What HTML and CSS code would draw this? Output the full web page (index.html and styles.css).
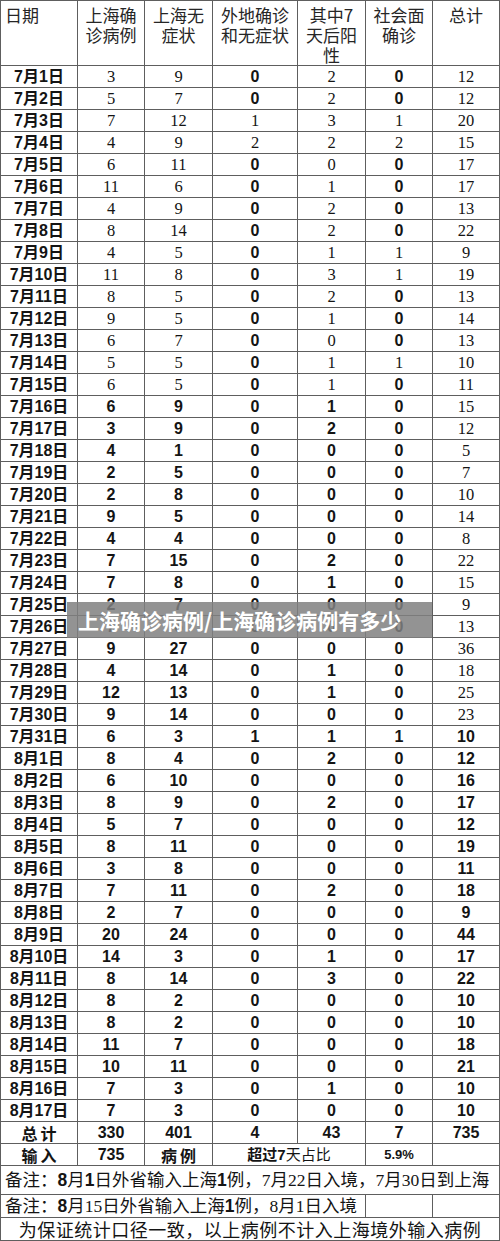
FILE: index.html
```html
<!DOCTYPE html>
<html lang="zh-CN">
<head>
<meta charset="utf-8">
<title>上海确诊病例</title>
<link rel="stylesheet" href="styles.css">
</head>
<body>
<div class="sheet">
  <div class="grid">
    <div class="h first">日期</div>
    <div class="h">上海确<br>诊病例</div>
    <div class="h">上海无<br>症状</div>
    <div class="h">外地确诊<br>和无症状</div>
    <div class="h">其中7<br>天后阳<br>性</div>
    <div class="h">社会面<br>确诊</div>
    <div class="h">总计</div>

    <div class="d">7月1日</div><div class="r">3</div><div class="r">9</div><div class="n">0</div><div class="r">2</div><div class="n">0</div><div class="r">12</div>
    <div class="d">7月2日</div><div class="r">5</div><div class="r">7</div><div class="n">0</div><div class="r">2</div><div class="n">0</div><div class="r">12</div>
    <div class="d">7月3日</div><div class="r">7</div><div class="r">12</div><div class="r">1</div><div class="r">3</div><div class="r">1</div><div class="r">20</div>
    <div class="d">7月4日</div><div class="r">4</div><div class="r">9</div><div class="r">2</div><div class="r">2</div><div class="r">2</div><div class="r">15</div>
    <div class="d">7月5日</div><div class="r">6</div><div class="r">11</div><div class="n">0</div><div class="r">0</div><div class="n">0</div><div class="r">17</div>
    <div class="d">7月6日</div><div class="r">11</div><div class="r">6</div><div class="n">0</div><div class="r">1</div><div class="n">0</div><div class="r">17</div>
    <div class="d">7月7日</div><div class="r">4</div><div class="r">9</div><div class="n">0</div><div class="r">2</div><div class="n">0</div><div class="r">13</div>
    <div class="d">7月8日</div><div class="r">8</div><div class="r">14</div><div class="n">0</div><div class="r">2</div><div class="n">0</div><div class="r">22</div>
    <div class="d">7月9日</div><div class="r">4</div><div class="r">5</div><div class="n">0</div><div class="r">1</div><div class="r">1</div><div class="r">9</div>
    <div class="d">7月10日</div><div class="r">11</div><div class="r">8</div><div class="n">0</div><div class="r">3</div><div class="r">1</div><div class="r">19</div>
    <div class="d">7月11日</div><div class="r">8</div><div class="r">5</div><div class="n">0</div><div class="r">2</div><div class="n">0</div><div class="r">13</div>
    <div class="d">7月12日</div><div class="r">9</div><div class="r">5</div><div class="n">0</div><div class="r">1</div><div class="n">0</div><div class="r">14</div>
    <div class="d">7月13日</div><div class="r">6</div><div class="r">7</div><div class="n">0</div><div class="r">0</div><div class="n">0</div><div class="r">13</div>
    <div class="d">7月14日</div><div class="r">5</div><div class="r">5</div><div class="n">0</div><div class="r">1</div><div class="r">1</div><div class="r">10</div>
    <div class="d">7月15日</div><div class="r">6</div><div class="r">5</div><div class="n">0</div><div class="r">1</div><div class="n">0</div><div class="r">11</div>
    <div class="d">7月16日</div><div class="n">6</div><div class="n">9</div><div class="n">0</div><div class="n">1</div><div class="n">0</div><div class="r">15</div>
    <div class="d">7月17日</div><div class="n">3</div><div class="n">9</div><div class="n">0</div><div class="n">2</div><div class="n">0</div><div class="r">12</div>
    <div class="d">7月18日</div><div class="n">4</div><div class="n">1</div><div class="n">0</div><div class="n">0</div><div class="n">0</div><div class="r">5</div>
    <div class="d">7月19日</div><div class="n">2</div><div class="n">5</div><div class="n">0</div><div class="n">0</div><div class="n">0</div><div class="r">7</div>
    <div class="d">7月20日</div><div class="n">2</div><div class="n">8</div><div class="n">0</div><div class="n">0</div><div class="n">0</div><div class="r">10</div>
    <div class="d">7月21日</div><div class="n">9</div><div class="n">5</div><div class="n">0</div><div class="n">0</div><div class="n">0</div><div class="r">14</div>
    <div class="d">7月22日</div><div class="n">4</div><div class="n">4</div><div class="n">0</div><div class="n">0</div><div class="n">0</div><div class="r">8</div>
    <div class="d">7月23日</div><div class="n">7</div><div class="n">15</div><div class="n">0</div><div class="n">2</div><div class="n">0</div><div class="r">22</div>
    <div class="d">7月24日</div><div class="n">7</div><div class="n">8</div><div class="n">0</div><div class="n">1</div><div class="n">0</div><div class="r">15</div>
    <div class="d">7月25日</div><div class="n">2</div><div class="n">7</div><div class="n">0</div><div class="n">0</div><div class="n">0</div><div class="r">9</div>
    <div class="d">7月26日</div><div class="n">7</div><div class="n">6</div><div class="n">0</div><div class="n">0</div><div class="n">0</div><div class="r">13</div>
    <div class="d">7月27日</div><div class="n">9</div><div class="n">27</div><div class="n">0</div><div class="n">0</div><div class="n">0</div><div class="r">36</div>
    <div class="d">7月28日</div><div class="n">4</div><div class="n">14</div><div class="n">0</div><div class="n">1</div><div class="n">0</div><div class="r">18</div>
    <div class="d">7月29日</div><div class="n">12</div><div class="n">13</div><div class="n">0</div><div class="n">1</div><div class="n">0</div><div class="r">25</div>
    <div class="d">7月30日</div><div class="n">9</div><div class="n">14</div><div class="n">0</div><div class="n">0</div><div class="n">0</div><div class="r">23</div>
    <div class="d">7月31日</div><div class="n">6</div><div class="n">3</div><div class="n">1</div><div class="n">1</div><div class="n">1</div><div class="n">10</div>
    <div class="d">8月1日</div><div class="n">8</div><div class="n">4</div><div class="n">0</div><div class="n">2</div><div class="n">0</div><div class="n">12</div>
    <div class="d">8月2日</div><div class="n">6</div><div class="n">10</div><div class="n">0</div><div class="n">0</div><div class="n">0</div><div class="n">16</div>
    <div class="d">8月3日</div><div class="n">8</div><div class="n">9</div><div class="n">0</div><div class="n">2</div><div class="n">0</div><div class="n">17</div>
    <div class="d">8月4日</div><div class="n">5</div><div class="n">7</div><div class="n">0</div><div class="n">0</div><div class="n">0</div><div class="n">12</div>
    <div class="d">8月5日</div><div class="n">8</div><div class="n">11</div><div class="n">0</div><div class="n">0</div><div class="n">0</div><div class="n">19</div>
    <div class="d">8月6日</div><div class="n">3</div><div class="n">8</div><div class="n">0</div><div class="n">0</div><div class="n">0</div><div class="n">11</div>
    <div class="d">8月7日</div><div class="n">7</div><div class="n">11</div><div class="n">0</div><div class="n">2</div><div class="n">0</div><div class="n">18</div>
    <div class="d">8月8日</div><div class="n">2</div><div class="n">7</div><div class="n">0</div><div class="n">0</div><div class="n">0</div><div class="n">9</div>
    <div class="d">8月9日</div><div class="n">20</div><div class="n">24</div><div class="n">0</div><div class="n">0</div><div class="n">0</div><div class="n">44</div>
    <div class="d">8月10日</div><div class="n">14</div><div class="n">3</div><div class="n">0</div><div class="n">1</div><div class="n">0</div><div class="n">17</div>
    <div class="d">8月11日</div><div class="n">8</div><div class="n">14</div><div class="n">0</div><div class="n">3</div><div class="n">0</div><div class="n">22</div>
    <div class="d">8月12日</div><div class="n">8</div><div class="n">2</div><div class="n">0</div><div class="n">0</div><div class="n">0</div><div class="n">10</div>
    <div class="d">8月13日</div><div class="n">8</div><div class="n">2</div><div class="n">0</div><div class="n">0</div><div class="n">0</div><div class="n">10</div>
    <div class="d">8月14日</div><div class="n">11</div><div class="n">7</div><div class="n">0</div><div class="n">0</div><div class="n">0</div><div class="n">18</div>
    <div class="d">8月15日</div><div class="n">10</div><div class="n">11</div><div class="n">0</div><div class="n">0</div><div class="n">0</div><div class="n">21</div>
    <div class="d">8月16日</div><div class="n">7</div><div class="n">3</div><div class="n">0</div><div class="n">1</div><div class="n">0</div><div class="n">10</div>
    <div class="d">8月17日</div><div class="n">7</div><div class="n">3</div><div class="n">0</div><div class="n">0</div><div class="n">0</div><div class="n">10</div>

    <div class="lbl">总计</div><div class="n">330</div><div class="n">401</div><div class="n">4</div><div class="n">43</div><div class="n">7</div><div class="n">735</div>
    <div class="lbl">输入</div><div class="n">735</div><div class="lbl">病例</div><div class="mix span2"><b>超过7</b>天占比</div><div class="pct">5.9%</div><div></div>

    <div class="note span7">备注：<b>8</b>月<b>1</b>日外省输入上海<b>1</b>例，7月22日入境，7月30日到上海</div>
    <div class="note span5">备注：<b>8</b>月15日外省输入上海<b>1</b>例，8月1日入境</div><div></div><div></div>
    <div class="foot span7">为保证统计口径一致，以上病例不计入上海境外输入病例</div>
  </div>
  <div class="banner">上海确诊病例/上海确诊病例有多少</div>
</div>
</body>
</html>
```

FILE: styles.css
```css
html, body {
  margin: 0;
  padding: 0;
  background: #fff;
}

.sheet {
  position: relative;
  width: 500px;
  height: 1241px;
  overflow: hidden;
}

.grid {
  box-sizing: border-box;
  width: 500px;
  display: grid;
  grid-template-columns: 76px 66px 67px 84px 67px 66px 66px;
  grid-template-rows: 64px repeat(50, 21px) 28px 22px 22px;
  gap: 1px;
  padding: 1px;
  background: #5e5e5e;
}

.grid > div {
  background: #fff;
  display: flex;
  align-items: center;
  justify-content: center;
  color: #141414;
  white-space: nowrap;
  line-height: 21px;
}

.h {
  align-items: flex-start !important;
  font-family: "Noto Sans CJK SC", sans-serif;
  font-size: 17px;
  line-height: 20px !important;
  padding-top: 4px;
  text-align: center;
  color: #262626 !important;
}

.h.first {
  justify-content: flex-start !important;
  padding-left: 4px;
}

.d {
  font-family: "Liberation Sans", "Noto Sans CJK SC", sans-serif;
  font-weight: bold;
  font-size: 16px;
}

.r {
  font-family: "Liberation Serif", serif;
  font-size: 16.5px;
}

.n {
  font-family: "Liberation Sans", sans-serif;
  font-weight: bold;
  font-size: 16px;
}

.lbl {
  font-family: "Noto Sans CJK SC", sans-serif;
  font-weight: bold;
  font-size: 16px;
  letter-spacing: 3px;
  padding-left: 3px;
  line-height: 20px !important;
}

.mix {
  font-family: "Liberation Sans", "Noto Sans CJK SC", sans-serif;
  font-size: 15px;
}

.pct {
  font-family: "Liberation Sans", sans-serif;
  font-weight: bold;
  font-size: 13px;
}

.span2 { grid-column: span 2; }
.span5 { grid-column: span 5; }
.span7 { grid-column: span 7; }

.note {
  justify-content: flex-start !important;
  padding-left: 4px;
  font-family: "Liberation Serif", "Noto Sans CJK SC", serif;
  font-size: 17.5px;
}

.note b {
  font-family: "Liberation Sans", sans-serif;
}

.foot {
  font-family: "Noto Sans CJK SC", sans-serif;
  font-size: 18px;
  letter-spacing: 0.5px;
}

.banner {
  position: absolute;
  left: 67px;
  top: 602px;
  width: 365px;
  height: 36px;
  box-sizing: border-box;
  padding-left: 11px;
  display: flex;
  align-items: center;
  background: rgba(128, 128, 128, 0.85);
  color: #fff;
  font-family: "Noto Sans CJK SC", sans-serif;
  font-weight: bold;
  font-size: 21px;
  white-space: nowrap;
}
```
